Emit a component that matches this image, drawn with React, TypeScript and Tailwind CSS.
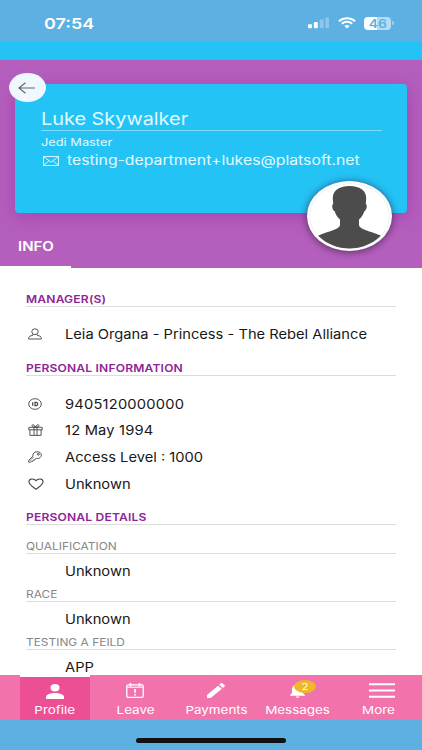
import type { ReactNode } from "react";

const details = [
    { label: "QUALIFICATION", value: "Unknown" },
    { label: "RACE", value: "Unknown" },
    { label: "TESTING A FEILD", value: "APP" },
];

function Wide({ children, className = "" }: { children: ReactNode; className?: string }) {
    return <span className={`inline-block shrink-0 whitespace-nowrap ${className}`}>{children}</span>;
}

function SectionTitle({ children, className = "" }: { children: ReactNode; className?: string }) {
    return (
        <h3 className={`flex h-4 items-center border-b border-[#dcdcdc] pt-[3px] text-[10.5px] leading-none font-semibold text-[#8e2496] ${className}`}>
            <Wide className="origin-left scale-x-[1.15] tracking-[0.015em]">{children}</Wide>
        </h3>
    );
}

function Row({ icon, children, className = "" }: { icon: ReactNode; children: ReactNode; className?: string }) {
    return (
        <div className={`flex items-center ${className}`}>
            <span className="ml-[2px] flex w-[37px] text-[#444]">{icon}</span>
            <Wide className="origin-left scale-x-[1.13] pt-px text-[13px] leading-none text-[#171717]">{children}</Wide>
        </div>
    );
}

function PersonIcon() {
    return (
        <svg width="14" height="12" viewBox="0 0 14 12" fill="none" stroke="currentColor" strokeWidth="0.9">
            <ellipse cx="7" cy="3.7" rx="3.2" ry="2.9" />
            <path d="M5 6.4V7.2L1.8 8.2Q.6 9 .6 11h12.8q0-2-1.2-2.8L9 7.2V6.4" />
        </svg>
    );
}

function IdIcon() {
    return (
        <svg width="14" height="12" viewBox="0 0 14 12" fill="none" stroke="currentColor" strokeWidth="0.9">
            <ellipse cx="7" cy="6" rx="6.3" ry="5.3" />
            <path strokeWidth="1.2" d="M4.7 4.2v3.6M7 4.3v3.4h1.1c2.2 0 2.2-3.4 0-3.4Z" />
        </svg>
    );
}

function GiftIcon() {
    return (
        <svg width="15" height="12" viewBox="0 0 15 12" fill="none" stroke="currentColor" strokeWidth="0.9">
            <path d="M.8 3.3h13.4v2.5H.8zM1.9 5.8v5.6h11.2V5.8M6 3.3v8M9 3.3v8M7.5 3.2C6.8.8 4.3 0 4 1.4c-.2 1 .9 1.8 3.5 1.8C8.2.8 10.7 0 11 1.4c.2 1-.9 1.8-3.5 1.8Z" />
        </svg>
    );
}

function KeyIcon() {
    return (
        <svg width="14" height="12" viewBox="0 0 14 12" fill="none" stroke="currentColor" strokeWidth="0.9">
            <path d="M5 5.2C4.4 2.8 6.2.7 9 .7c2.6 0 4.4 1.4 4.4 3.3 0 2.3-2.3 3.9-5 3.5L7 8.2l-.4 1H5.2l-.3 1.1H3.4l-.8.9H.7V9.4Z" />
            <ellipse cx="10.3" cy="3.2" rx="1.1" ry=".9" />
            <path d="M5.8 5.8 1.6 10" strokeWidth="0.6" />
        </svg>
    );
}

function HeartIcon() {
    return (
        <svg width="16" height="12" viewBox="0 0 16 12" fill="none" stroke="currentColor" strokeWidth="1.1" strokeLinejoin="round">
            <path d="M8 11.2C4.6 8.8.9 6.4.9 3.7.9.5 6 .1 8 2.7 10 .1 15.1.5 15.1 3.7 15.1 6.4 11.4 8.8 8 11.2Z" />
        </svg>
    );
}

function StatusBar() {
    return (
        <div className="flex h-[42px] items-center bg-[#5cb0e2] pt-1 pl-11 text-white">
            <Wide className="w-[264px] origin-left scale-x-[1.2] text-[15px] leading-none font-semibold">07:54</Wide>
            <svg width="21" height="12" viewBox="0 0 21 12" fill="currentColor">
                <rect x="0" y="7.2" width="4" height="4" rx="1" />
                <rect x="5.8" y="5" width="4" height="6.2" rx="1" />
                <rect x="11.7" y="2.6" width="4" height="8.6" rx="1" opacity=".3" />
                <rect x="17.4" y=".4" width="3.6" height="10.8" rx="1" opacity=".3" />
            </svg>
            <svg className="ml-[9px]" width="18" height="12" viewBox="0 0 18 12" fill="none" stroke="currentColor" strokeWidth="2">
                <path d="M.9 4.2C5.5.2 12.5.2 17.1 4.2M3.8 6.8c3-2.6 7.4-2.6 10.4 0" />
                <path d="M6.3 9.1c1.7-1.4 3.7-1.4 5.4 0L9 11.5Z" fill="currentColor" stroke="none" />
            </svg>
            <span className="ml-2 flex h-[13px] w-[27px] items-center justify-center rounded-[4px] bg-linear-to-r from-white from-48% to-[#b3dcf4] to-48% text-[12px] leading-none font-semibold text-[#5cb0e2]">
                <Wide className="scale-x-[1.15] pt-px">46</Wide>
            </span>
            <span className="ml-[1px] h-1 w-[2px] rounded-r-full bg-[#a6d4f0]" />
        </div>
    );
}

function Header() {
    return (
        <header className="relative h-[208px] bg-[#b45fbd] pt-6 pl-[15px]">
            <div className="h-[129px] w-[392px] rounded-[4px] bg-[#23c3f6] pt-6 pl-[26px] text-[#e3faff] shadow-[0_3px_16px_1px_rgba(150,45,165,0.5)]">
                <div className="flex h-[23px] w-[341px] items-center border-b border-[#7bdcfb]">
                    <Wide className="origin-left scale-x-[1.135] text-[17.5px] leading-none">Luke Skywalker</Wide>
                </div>
                <div className="flex h-[22px] items-center pt-[2px]">
                    <Wide className="origin-left scale-x-[1.22] text-[10.5px] leading-none">Jedi Master</Wide>
                </div>
                <div className="-mt-[1px] flex h-4 items-center">
                    <svg className="mt-px ml-[2px]" width="16" height="10" viewBox="0 0 16 10" fill="none" stroke="currentColor" strokeWidth="0.9">
                        <path d="M.5.5h15v9H.5zL8 6.2 15.5.5M.5 9.5 6 4.7M15.5 9.5 10 4.7" />
                    </svg>
                    <Wide className="ml-2 origin-left scale-x-[1.215] text-[13px] leading-none">testing-department+lukes@platsoft.net</Wide>
                </div>
            </div>
            <button className="absolute top-[13px] left-[9px] flex h-[29px] w-[37px] items-center justify-center rounded-[50%] bg-[#eff8ff] pr-[2px] text-[#666]">
                <svg width="18" height="12" viewBox="0 0 18 12" fill="none" stroke="currentColor" strokeWidth="1.1">
                    <path d="M17 6H1M7.5.8 1 6l6.5 5.2" />
                </svg>
            </button>
            <div className="absolute top-[121px] left-[307px] h-[70px] w-[85px] overflow-hidden rounded-[50%] border-2 border-white bg-white shadow-[0_1px_7px_1px_rgba(50,30,60,0.6)]">
                <svg width="81" height="66" viewBox="0 0 81 66" fill="#4c4c4c">
                    <ellipse cx="40.5" cy="33" rx="40" ry="32.5" fill="#fff" stroke="#e4e4e4" strokeWidth=".6" />
                    <path d="M40.5 3C29.5 3 23.5 8 23.8 15.5L24.2 21C22.4 21.5 23.2 27.5 25.7 28.2 26.8 31.5 28.5 34.5 31 36.5V42C30.5 47 16 49 9.2 52.8 18 61.5 29 65.5 40.5 65.5S63 61.5 71.8 52.8C65 49 50.5 47 50 42V36.5C52.5 34.5 54.2 31.5 55.3 28.2 57.8 27.5 58.6 21.5 56.8 21L57.2 15.5C57.5 8 51.5 3 40.5 3Z" />
                </svg>
            </div>
            <div className="absolute bottom-0 left-0 flex h-11 w-[71px] items-center border-b-2 border-white pt-1 pl-[18px] text-[12.5px] leading-none font-semibold text-white">
                <Wide className="origin-left scale-x-[1.2]">INFO</Wide>
            </div>
        </header>
    );
}

function NavItem({ icon, label, active = false }: { icon: ReactNode; label: string; active?: boolean }) {
    return (
        <div className={`flex w-[70px] flex-col items-center ${active ? "border-t-2 border-white bg-[#ed4f95] pt-[6px]" : "pt-[7px]"}`}>
            <span className="flex h-4 items-center">{icon}</span>
            <Wide className={`${active ? "mt-[5px]" : "mt-[6px]"} scale-x-[1.22] pt-px text-[11px] leading-none`}>{label}</Wide>
        </div>
    );
}

function BottomNav() {
    return (
        <nav className="flex h-[45px] justify-between bg-[#f272ab] pr-[9px] pl-5 text-white">
            <NavItem active label="Profile" icon={
                <svg className="mr-px" width="18" height="15" viewBox="0 0 18 15" fill="currentColor">
                    <ellipse cx="9" cy="3.8" rx="4.5" ry="3.7" />
                    <path d="M0 15v-2.2C0 10.3 5 9 9 9s9 1.3 9 3.8V15Z" />
                </svg>
            } />
            <NavItem label="Leave" icon={
                <svg className="mr-px" width="18" height="15" viewBox="0 0 18 15" fill="none" stroke="currentColor" strokeWidth="1.3">
                    <rect x=".8" y="1.8" width="16.4" height="12.5" rx="1.3" />
                    <path d="M1 4.2h16" strokeWidth="1.1" />
                    <path d="M4.5 0v3.5M13.5 0v3.5M9 6v3.8M9 11v1.5" strokeWidth="1.7" />
                </svg>
            } />
            <NavItem label="Payments" icon={
                <svg className="mr-px" width="18" height="15" viewBox="3 3 18 18" preserveAspectRatio="none" fill="currentColor">
                    <path d="M3 17.25V21h3.75L17.81 9.94l-3.75-3.75zM20.71 7.04a1 1 0 0 0 0-1.41l-2.34-2.34a1 1 0 0 0-1.41 0l-1.83 1.83 3.75 3.75z" />
                </svg>
            } />
            <NavItem label="Messages" icon={
                <span className="relative flex">
                    <svg width="15" height="15" viewBox="0 0 15 15" fill="currentColor">
                        <path d="M6.3 1.5V.8c0-1 2.4-1 2.4 0v.7C11.5 2 13 4 13 6.3v4l2 1.7v.8H0V12l2-1.7v-4C2 4 3.5 2 6.3 1.5ZM5.6 13.5h3.8c0 1.7-3.8 1.7-3.8 0Z" />
                    </svg>
                    <span className="absolute -top-[3px] left-[4px] flex h-[13px] w-[22px] items-center justify-center rounded-[50%] bg-[#efb827] pt-px text-[9.5px] leading-none">
                        <Wide className="scale-x-[1.2]">2</Wide>
                    </span>
                </span>
            } />
            <NavItem label="More" icon={
                <svg className="ml-2" width="26" height="15" viewBox="0 0 26 15" stroke="currentColor" strokeWidth="2">
                    <path d="M0 1.2h26M0 7.5h26M0 13.8h26" />
                </svg>
            } />
        </nav>
    );
}

export default function App() {
    return (
        <div className="flex h-[750px] w-[422px] flex-col overflow-hidden bg-white font-['Inter',sans-serif]">
            <StatusBar />
            <div className="h-[18px] bg-[#23c3f6]" />
            <Header />
            <main className="h-[407px] overflow-hidden pt-[23px] pr-[26px] pl-[26px]">
                <SectionTitle>MANAGER(S)</SectionTitle>
                <Row className="mt-[13px] h-[27px]" icon={<PersonIcon />}>Leia Organa - Princess - The Rebel Alliance</Row>
                <SectionTitle className="mt-[13px]">PERSONAL INFORMATION</SectionTitle>
                <div className="mt-[14.5px]">
                    <Row className="h-[26.6px]" icon={<IdIcon />}>
                        <span className="tracking-[0.013em]">9405120000000</span>
                    </Row>
                    <Row className="h-[26.6px]" icon={<GiftIcon />}>
                        <span className="tracking-[0.013em]">12 May 1994</span>
                    </Row>
                    <Row className="h-[26.6px]" icon={<KeyIcon />}>Access Level : 1000</Row>
                    <Row className="h-[26.6px]" icon={<HeartIcon />}>Unknown</Row>
                </div>
                <SectionTitle className="mt-[12.5px]">PERSONAL DETAILS</SectionTitle>
                <div className="mt-[13px]">
                    {details.map((item) => (
                        <div key={item.label}>
                            <div className="flex h-4 items-center border-b border-[#dcdcdc] pt-[2px] text-[10.5px] leading-none text-[#858585]">
                                <Wide className="origin-left scale-x-[1.135]">{item.label}</Wide>
                            </div>
                            <Row className="h-8 pt-px" icon={null}>{item.value}</Row>
                        </div>
                    ))}
                </div>
            </main>
            <BottomNav />
            <div className="flex h-[30px] justify-center bg-[#5cb0e2] pt-[18px]">
                <div className="h-[5px] w-[150px] rounded-full bg-[#111]" />
            </div>
        </div>
    );
}
